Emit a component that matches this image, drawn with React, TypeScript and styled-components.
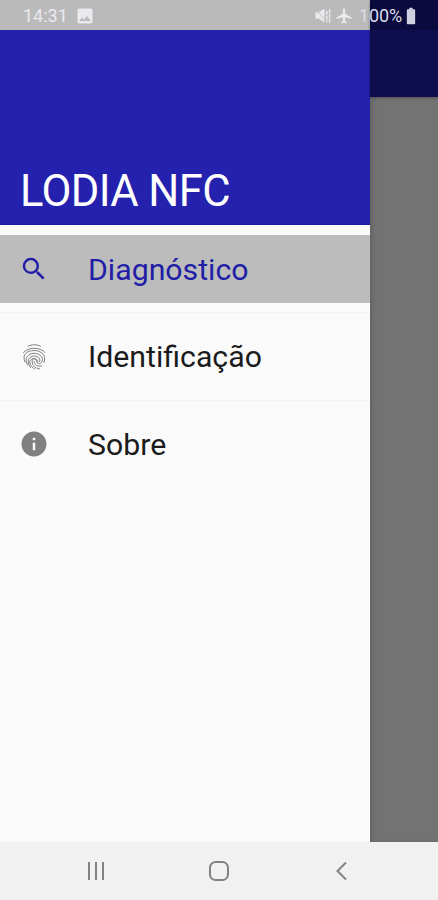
import React from "react";
import styled, { createGlobalStyle } from "styled-components";
import {
  MdAirplanemodeActive,
  MdBatteryFull,
  MdImage,
  MdInfo,
  MdSearch,
} from "react-icons/md";

const GlobalStyle = createGlobalStyle`
  * { box-sizing: border-box; }
  body { margin: 0; font-family: Roboto, "Liberation Sans", sans-serif; }
`;

const Screen = styled.div`
  position: relative;
  display: flex;
  flex-direction: column;
  width: 438px;
  height: 900px;
  overflow: hidden;
  background: #fafafa;
`;

const StatusBar = styled.header`
  position: absolute;
  inset: 0 0 auto 0;
  z-index: 2;
  display: flex;
  align-items: center;
  justify-content: space-between;
  height: 30px;
  padding: 1px 22px 0 23px;
  font-size: 18px;
  line-height: 30px;
  color: #e9e9ee;
`;

const StatusGroup = styled.div<{ $gap: number }>`
  display: flex;
  align-items: center;
  gap: ${(p) => p.$gap}px;
`;

const Percent = styled.span`
  margin-left: 3px;
  letter-spacing: -0.1px;
  color: #dcdce6;
`;

const Battery = styled(MdBatteryFull)`
  margin: 0 -5px 0 -4px;
  color: #cfcfdf;
`;

const Body = styled.div`
  display: flex;
  flex: 1;
  min-height: 0;
`;

const Drawer = styled.aside`
  display: flex;
  flex-direction: column;
  width: 370px;
  background: #fafafa;
`;

const DrawerHeader = styled.div`
  display: flex;
  align-items: flex-end;
  height: 225px;
  padding: 0 20px 7px;
  border-top: 30px solid #bababa;
  border-bottom: 1px solid #1c1a9c;
  background: #2421ae;
`;

const Title = styled.h1`
  margin: 0;
  font-size: 43.5px;
  font-weight: 400;
  line-height: 50px;
  letter-spacing: -0.6px;
  white-space: nowrap;
  color: #fff;
`;

const Menu = styled.nav`
  display: flex;
  flex-direction: column;
  padding-top: 10px;
`;

const MenuItem = styled.a<{ $active?: boolean }>`
  display: flex;
  align-items: center;
  height: 68px;
  padding-left: 19px;
  font-size: 30.25px;
  color: ${(p) => (p.$active ? "#211da7" : "#1b1b1b")};
  background: ${(p) => (p.$active ? "#bcbcbc" : "transparent")};

  svg {
    flex: none;
    width: 30px;
    height: 30px;
    margin-right: 39px;
    color: ${(p) => (p.$active ? "#211da7" : "#808080")};
  }
`;

const Divider = styled.hr`
  width: 100%;
  height: 1px;
  margin: 9px 0 9.500px;
  border: 0;
  background: #f3f3f3;
`;

const Scrim = styled.main`
  flex: 1;
  background: #737373;
  box-shadow: inset 4px 0 6px -3px rgba(0, 0, 0, 0.2);
`;

const AppBar = styled.div`
  height: 97px;
  background: linear-gradient(#0a0a3f 30px, #0e0e4f 30px);
  box-shadow: 0 1px 3px rgba(0, 0, 0, 0.3);
`;

const NavBar = styled.footer`
  display: flex;
  align-items: center;
  justify-content: space-between;
  height: 58px;
  padding: 0 84px;
  background: #f1f1f1;

  svg {
    fill: none;
    stroke: #828282;
    stroke-width: 2;
  }
`;

const MuteIcon = () => (
  <svg width="18" height="18" viewBox="0 0 18 18">
    <path d="M1.500 5.500h3l6-4v14l-6-4h-3z" fill="currentColor" />
    <path d="M1 1.500l12 14" stroke="#bababa" strokeWidth="0.900" />
    <path d="M12.800 4v11M15.600 2v14" stroke="currentColor" strokeWidth="1.500" strokeDasharray="4 0.700" />
  </svg>
);

const FingerprintIcon = () => (
  <svg viewBox="0 0 30 30" fill="none" stroke="currentColor" strokeWidth="1" strokeLinecap="round">
    <path d="M9 4.200C12.500 2.300 18 2.300 21.500 4.200" />
    <path d="M4.500 10.500C9 4.800 21.500 4.800 26 10.500" />
    <path d="M6 20C2.500 12.500 8 8.500 15.200 8.500S28 13.500 25 20.500" />
    <path d="M8.500 23C4.500 16.500 9 11.300 15.200 11.300s10.200 5 7.300 9.200c-1.700 2.300-4.700 1-5-1.500-.3-3-4.300-3-4.300.3 0 4.700 3.300 7.200 7.300 7.500" />
    <path d="M11.500 25.500C6.500 18.500 10.500 14 15.200 14s6.500 3.700 5.500 5.500" />
    <path d="M15.500 27C8.500 22.500 10 16.500 15 16.500c2.300 0 3.700 1.500 4 3.500" />
    <path d="M15.200 19.500c.3 3.700 3.300 5.300 7.500 4.500" />
  </svg>
);

export default function App() {
  return (
    <>
      <GlobalStyle />
      <Screen>
        <StatusBar>
          <StatusGroup $gap={7}>
            <span>14:31</span>
            <MdImage size={20} />
          </StatusGroup>
          <StatusGroup $gap={3}>
            <MuteIcon />
            <MdAirplanemodeActive size={18} />
            <Percent>100%</Percent>
            <Battery size={20} />
          </StatusGroup>
        </StatusBar>
        <Body>
          <Drawer>
            <DrawerHeader>
              <Title>LODIA NFC</Title>
            </DrawerHeader>
            <Menu>
              <MenuItem $active>
                <MdSearch />
                <span>Diagnóstico</span>
              </MenuItem>
              <Divider />
              <MenuItem>
                <FingerprintIcon />
                <span>Identificação</span>
              </MenuItem>
              <Divider />
              <MenuItem>
                <MdInfo />
                <span>Sobre</span>
              </MenuItem>
            </Menu>
          </Drawer>
          <Scrim>
            <AppBar />
          </Scrim>
        </Body>
        <NavBar>
          <svg width="24" height="24" viewBox="0 0 24 24">
            <path d="M5 3v18M12 3v18M19 3v18" />
          </svg>
          <svg width="24" height="24" viewBox="0 0 24 24">
            <rect x="3" y="3" width="18" height="18" rx="5.500" />
          </svg>
          <svg width="24" height="24" viewBox="0 0 24 24">
            <path d="M16 3.500L7.500 12l8.500 8.500" />
          </svg>
        </NavBar>
      </Screen>
    </>
  );
}
